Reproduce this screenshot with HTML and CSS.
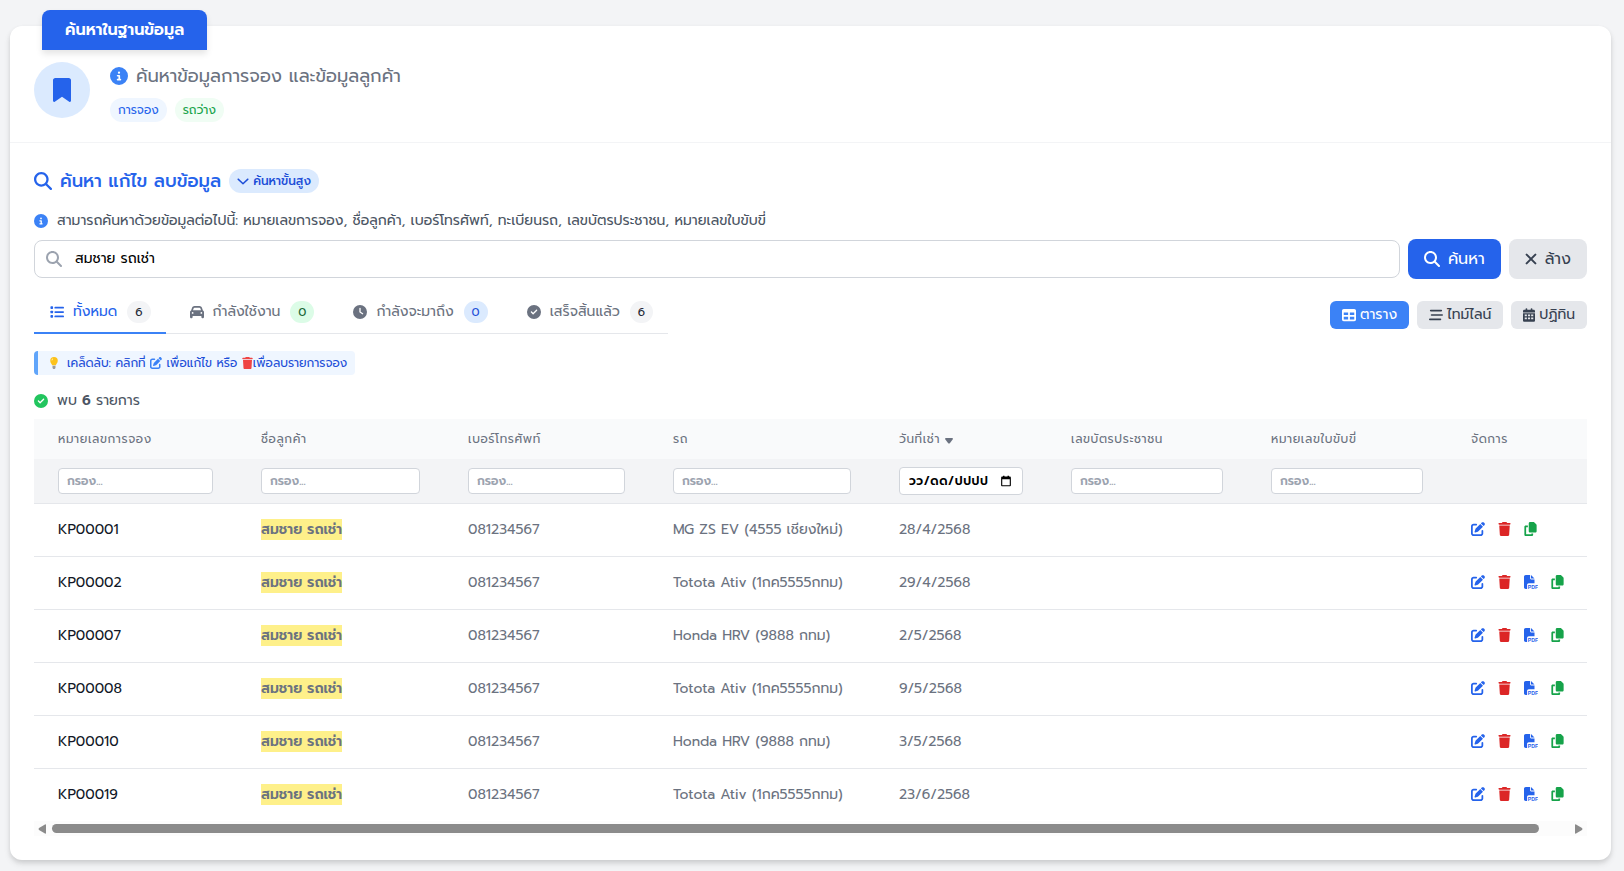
FILE: index.html
```html
<!DOCTYPE html>
<html lang="th">
<head>
<meta charset="utf-8">
<meta name="viewport" content="width=device-width, initial-scale=1">
<title>ค้นหาในฐานข้อมูล</title>
<link rel="stylesheet" href="styles.css">
</head>
<body>
<svg class="sprite" aria-hidden="true">
  <symbol id="i-search" viewBox="0 0 512 512"><path d="M416 208c0 45.900-14.900 88.300-40 122.700L502.600 457.400c12.500 12.500 12.500 32.800 0 45.300s-32.800 12.500-45.300 0L330.700 376c-34.400 25.200-76.800 40-122.700 40C93.100 416 0 322.900 0 208S93.100 0 208 0S416 93.100 416 208zM208 352a144 144 0 1 0 0-288 144 144 0 1 0 0 288z"/></symbol>
  <symbol id="i-info" viewBox="0 0 512 512"><path d="M256 512A256 256 0 1 0 256 0a256 256 0 1 0 0 512zM216 336h24V272H216c-13.300 0-24-10.700-24-24s10.700-24 24-24h48c13.300 0 24 10.700 24 24v88h8c13.300 0 24 10.700 24 24s-10.700 24-24 24H216c-13.300 0-24-10.700-24-24s10.700-24 24-24zm40-208a32 32 0 1 1 0 64 32 32 0 1 1 0-64z"/></symbol>
  <symbol id="i-bookmark" viewBox="0 0 384 512"><path d="M0 48V487.700C0 501.100 10.900 512 24.300 512c5 0 9.900-1.500 14-4.400L192 400 345.700 507.600c4.100 2.900 9 4.400 14 4.400c13.400 0 24.300-10.900 24.300-24.300V48c0-26.500-21.500-48-48-48H48C21.500 0 0 21.500 0 48z"/></symbol>
  <symbol id="i-check" viewBox="0 0 512 512"><path d="M256 512A256 256 0 1 0 256 0a256 256 0 1 0 0 512zM369 209L241 337c-9.400 9.400-24.600 9.400-33.900 0l-64-64c-9.400-9.400-9.400-24.600 0-33.900s24.600-9.400 33.900 0l47 47L335 175c9.400-9.400 24.600-9.400 33.900 0s9.400 24.600 0 33.900z"/></symbol>
  <symbol id="i-clock" viewBox="0 0 512 512"><path d="M256 0a256 256 0 1 1 0 512A256 256 0 1 1 256 0zM232 120V256c0 8 4 15.500 10.700 20l96 64c11 7.400 25.900 4.400 33.300-6.700s4.400-25.900-6.700-33.300L280 243.200V120c0-13.300-10.700-24-24-24s-24 10.700-24 24z"/></symbol>
  <symbol id="i-car" viewBox="0 0 512 512"><path d="M135.200 117.400L109.100 192H402.900l-26.100-74.600C372.300 104.600 360.200 96 346.600 96H165.400c-13.600 0-25.700 8.600-30.200 21.400zM39.600 196.800L74.800 96.300C88.300 57.800 124.600 32 165.400 32H346.600c40.800 0 77.100 25.800 90.600 64.300l35.200 100.500c23.200 9.600 39.600 32.500 39.600 59.200V400v48c0 17.700-14.300 32-32 32H448c-17.700 0-32-14.300-32-32V400H96v48c0 17.700-14.300 32-32 32H32c-17.700 0-32-14.300-32-32V400 256c0-26.700 16.400-49.600 39.600-59.200zM128 288a32 32 0 1 0-64 0 32 32 0 1 0 64 0zm288 32a32 32 0 1 0 0-64 32 32 0 1 0 0 64z"/></symbol>
  <symbol id="i-list" viewBox="0 0 512 512"><rect x="16" y="48" width="96" height="96" rx="24"/><rect x="16" y="208" width="96" height="96" rx="24"/><rect x="16" y="368" width="96" height="96" rx="24"/><rect x="160" y="64" width="352" height="64" rx="32"/><rect x="160" y="224" width="352" height="64" rx="32"/><rect x="160" y="384" width="352" height="64" rx="32"/></symbol>
  <symbol id="i-table" viewBox="0 0 512 512"><path d="M64 256V160H224v96H64zm0 64H224v96H64V320zm224 96V320H448v96H288zM448 256H288V160H448v96zM64 32C28.700 32 0 60.700 0 96V416c0 35.300 28.700 64 64 64H448c35.300 0 64-28.700 64-64V96c0-35.300-28.700-64-64-64H64z"/></symbol>
  <symbol id="i-bars" viewBox="0 0 512 512"><rect x="32" y="64" width="448" height="60" rx="30"/><rect x="64" y="226" width="448" height="60" rx="30"/><rect x="0" y="388" width="448" height="60" rx="30"/></symbol>
  <symbol id="i-calendar" viewBox="0 0 448 512"><path fill-rule="evenodd" d="M96 32a32 32 0 0 1 64 0V64H288V32a32 32 0 0 1 64 0V64h48c26.500 0 48 21.500 48 48v48H0V112C0 85.500 21.500 64 48 64H96zM0 192H448V464c0 26.500-21.500 48-48 48H48c-26.500 0-48-21.500-48-48zM64 240v64h80v-64zM184 240v64h80v-64zM304 240v64h80v-64zM64 352v64h80v-64zM184 352v64h80v-64zM304 352v64h80v-64z"/></symbol>
  <symbol id="i-x" viewBox="0 0 384 512"><path d="M52 116L332 396M332 116L52 396" fill="none" stroke="currentColor" stroke-width="64" stroke-linecap="round"/></symbol>
  <symbol id="i-chevron" viewBox="0 0 512 512"><path d="M48 176L256 376L464 176" fill="none" stroke="currentColor" stroke-width="60" stroke-linecap="round" stroke-linejoin="round"/></symbol>
  <symbol id="i-edit" viewBox="0 0 512 512"><path d="M471.600 21.700c-21.900-21.900-57.300-21.900-79.200 0L362.300 51.700l97.900 97.900 30.100-30.100c21.900-21.900 21.900-57.300 0-79.200L471.600 21.700zm-299.200 220c-6.100 6.100-10.800 13.600-13.500 21.900l-29.600 88.800c-2.900 8.600-.6 18.100 5.800 24.600s15.900 8.700 24.600 5.800l88.800-29.600c8.200-2.700 15.700-7.400 21.900-13.500L437.700 172.300 339.700 74.300 172.400 241.700zM96 64C43 64 0 107 0 160V416c0 53 43 96 96 96H352c53 0 96-43 96-96V320c0-17.700-14.300-32-32-32s-32 14.300-32 32v96c0 17.700-14.300 32-32 32H96c-17.700 0-32-14.300-32-32V160c0-17.700 14.300-32 32-32h96c17.700 0 32-14.300 32-32s-14.300-32-32-32H96z"/></symbol>
  <symbol id="i-trash" viewBox="0 0 448 512"><path d="M135.200 17.700L128 32H32C14.300 32 0 46.300 0 64S14.300 96 32 96H416c17.700 0 32-14.300 32-32s-14.300-32-32-32H320l-7.200-14.300C307.400 6.800 296.300 0 284.200 0H163.800c-12.100 0-23.200 6.800-28.600 17.700zM416 128H32L53.200 467c1.600 25.300 22.600 45 47.900 45H346.900c25.300 0 46.300-19.700 47.900-45L416 128z"/></symbol>
  <symbol id="i-copy" viewBox="0 0 448 512"><path d="M208 0H332.100c12.700 0 24.900 5.100 33.900 14.100l67.900 67.900c9 9 14.100 21.200 14.100 33.900V336c0 26.500-21.500 48-48 48H208c-26.500 0-48-21.500-48-48V48c0-26.500 21.500-48 48-48zM48 128h80v64H64V448H256V416h64v48c0 26.500-21.500 48-48 48H48c-26.500 0-48-21.500-48-48V176c0-26.500 21.500-48 48-48z"/></symbol>
  <symbol id="i-pdf" viewBox="0 0 512 512"><path d="M0 64C0 28.700 28.700 0 64 0H224V128c0 17.700 14.300 32 32 32H384V304H176c-35.300 0-64 28.700-64 64V512H64c-35.300 0-64-28.700-64-64V64zm384 64H256V0L384 128z"/><text class="pdf-label" x="138" y="510">PDF</text></symbol>
  <symbol id="i-bulb" viewBox="0 0 16 16"><path fill="#fcc21b" d="M8 0a5 5 0 0 0-5 5C3 7.800 5 9 5.500 11h5c.5-2 2.500-3.200 2.500-6A5 5 0 0 0 8 0z"/><path fill="#fff0a8" d="M6.600 1.600c-1.300.5-2 1.800-1.900 3.200.7.100 2.500-1.600 1.900-3.200z"/><path fill="#9b9b9b" d="M6 11.500h4v3L9 16H7l-1-1.500z"/></symbol>
  <symbol id="i-date" viewBox="0 0 16 16"><path fill-rule="evenodd" d="M3 2h1V1h2v1h4V1h2v1h1c.8 0 1.500.7 1.500 1.500v10c0 .8-.7 1.500-1.500 1.500H3c-.8 0-1.500-.7-1.500-1.500v-10C1.500 2.700 2.200 2 3 2zM3 5.500v8h10v-8z"/></symbol>
</svg>

<main class="card">
  <h1 class="card-tab">ค้นหาในฐานข้อมูล</h1>
  <header class="intro">
    <span class="avatar"><svg class="ic-bookmark"><use href="#i-bookmark"/></svg></span>
    <div class="intro-body">
      <p class="intro-title"><svg class="ic18 info"><use href="#i-info"/></svg><span>ค้นหาข้อมูลการจอง และข้อมูลลูกค้า</span></p>
      <div class="chips"><span class="chip blue">การจอง</span><span class="chip green">รถว่าง</span></div>
    </div>
  </header>

  <section class="content">
    <div class="heading">
      <svg class="ic18"><use href="#i-search"/></svg>
      <h2>ค้นหา แก้ไข ลบข้อมูล</h2>
      <button class="advanced" type="button"><svg class="ic12"><use href="#i-chevron"/></svg>ค้นหาขั้นสูง</button>
    </div>
    <p class="help"><svg class="ic14 info"><use href="#i-info"/></svg><label for="q">สามารถค้นหาด้วยข้อมูลต่อไปนี้: หมายเลขการจอง, ชื่อลูกค้า, เบอร์โทรศัพท์, ทะเบียนรถ, เลขบัตรประชาชน, หมายเลขใบขับขี่</label></p>
    <form class="search">
      <div class="search-box"><svg class="ic16"><use href="#i-search"/></svg><input id="q" type="text" value="สมชาย รถเช่า"></div>
      <button class="btn-search" type="button"><svg class="ic16"><use href="#i-search"/></svg>ค้นหา</button>
      <button class="btn-clear" type="button"><svg class="ic-x"><use href="#i-x"/></svg>ล้าง</button>
    </form>

    <div class="toolbar">
      <nav class="tabs">
        <button class="tab active" type="button"><svg class="ic14"><use href="#i-list"/></svg>ทั้งหมด<span class="badge">6</span></button>
        <button class="tab" type="button"><svg class="ic14"><use href="#i-car"/></svg>กำลังใช้งาน<span class="badge b-green">0</span></button>
        <button class="tab" type="button"><svg class="ic14"><use href="#i-clock"/></svg>กำลังจะมาถึง<span class="badge b-blue">0</span></button>
        <button class="tab" type="button"><svg class="ic14"><use href="#i-check"/></svg>เสร็จสิ้นแล้ว<span class="badge">6</span></button>
      </nav>
      <div class="views">
        <button class="view on" type="button"><svg class="ic14"><use href="#i-table"/></svg>ตาราง</button>
        <button class="view" type="button"><svg class="ic14"><use href="#i-bars"/></svg>ไทม์ไลน์</button>
        <button class="view" type="button"><svg class="ic-cal"><use href="#i-calendar"/></svg>ปฏิทิน</button>
      </div>
    </div>

    <p class="tip"><svg class="ic12 bulb"><use href="#i-bulb"/></svg>เคล็ดลับ: คลิกที่ <svg class="ic12 info"><use href="#i-edit"/></svg> เพื่อแก้ไข หรือ <svg class="ic-trash red"><use href="#i-trash"/></svg>เพื่อลบรายการจอง</p>
    <p class="found"><svg class="ic14"><use href="#i-check"/></svg><span>พบ <strong>6</strong> รายการ</span></p>

    <div class="table-wrap">
      <table>
        <colgroup><col class="c-id"><col class="c-name"><col class="c-phone"><col class="c-car"><col class="c-date"><col class="c-card"><col class="c-card"><col class="c-act"></colgroup>
        <thead>
          <tr><th>หมายเลขการจอง</th><th>ชื่อลูกค้า</th><th>เบอร์โทรศัพท์</th><th>รถ</th><th>วันที่เช่า <svg class="sort" viewBox="0 0 8 6"><path d="M0 1Q0 0 1 0H7Q8 0 8 1L5 5Q4 6 3 5Z"/></svg></th><th>เลขบัตรประชาชน</th><th>หมายเลขใบขับขี่</th><th>จัดการ</th></tr>
          <tr class="filters">
            <th><input type="text" aria-label="หมายเลขการจอง" placeholder="กรอง..."></th>
            <th><input type="text" aria-label="ชื่อลูกค้า" placeholder="กรอง..."></th>
            <th><input type="text" aria-label="เบอร์โทรศัพท์" placeholder="กรอง..."></th>
            <th><input type="text" aria-label="รถ" placeholder="กรอง..."></th>
            <th><div class="date"><input type="text" aria-label="วันที่เช่า" value="วว/ดด/ปปปป"><svg class="ic12"><use href="#i-date"/></svg></div></th>
            <th><input type="text" aria-label="เลขบัตรประชาชน" placeholder="กรอง..."></th>
            <th><input type="text" aria-label="หมายเลขใบขับขี่" placeholder="กรอง..."></th>
            <th></th>
          </tr>
        </thead>
        <tbody id="rows"></tbody>
      </table>
    </div>
    <div class="scroll"><svg viewBox="0 0 8 10"><path d="M8 1V9Q8 10 7 9.500L1 6Q0 5 1 4L7 .5Q8 0 8 1z"/></svg><div class="track"><div class="thumb"></div></div><svg viewBox="0 0 8 10"><path d="M0 1V9Q0 10 1 9.500L7 6Q8 5 7 4L1 .5Q0 0 0 1z"/></svg></div>
  </section>
</main>
<script src="app.js"></script>
</body>
</html>
```

FILE: styles.css
```css
* { box-sizing: border-box; }
body { margin: 0; padding: 26px 13px 11px 10px; background: #f3f4f6; color: #4b5563; font: 14px/20px "Prompt", "Noto Sans Thai", "Noto Sans", sans-serif; }
h1, h2, p { margin: 0; }
button, input { font: inherit; color: inherit; margin: 0; }
button { border: 0; cursor: pointer; white-space: nowrap; }
svg { display: block; flex: none; fill: currentColor; }
.sprite { position: absolute; width: 0; height: 0; }
.ic18 { width: 18px; height: 18px; }
.ic16 { width: 16px; height: 16px; }
.ic14 { width: 14px; height: 14px; }
.ic12 { width: 12px; height: 12px; }
.ic-cal { width: 12px; height: 14px; }
.ic-x { width: 12px; height: 16px; }
.ic-trash { width: 11px; height: 12px; }
.ic-bookmark { width: 18px; height: 24px; }
.info { color: #3b82f6; }
.red { color: #ef4444; }

.card { position: relative; background: #fff; border-radius: 12px; box-shadow: 0 4px 6px rgba(0,0,0,.1), 0 2px 4px rgba(0,0,0,.08); }
.card-tab { position: absolute; top: -16px; left: 32px; padding: 8px 23px; border-radius: 8px 8px 0 0; background: #2563eb; color: #fff; font-size: 16px; line-height: 24px; font-weight: 600; white-space: nowrap; box-shadow: 0 4px 6px rgba(0,0,0,.1); }
.intro { display: flex; gap: 20px; padding: 36px 24px 20px; border-bottom: 1px solid #f3f4f6; }
.avatar { display: flex; align-items: center; justify-content: center; width: 56px; height: 56px; border-radius: 50%; background: #dbeafe; color: #2563eb; }
.intro-title { display: flex; align-items: center; gap: 8px; height: 28px; font-size: 18px; line-height: 28px; color: #6b7280; }
.chips { display: flex; gap: 8px; margin-top: 8px; }
.chip { padding: 4px 8px; border-radius: 12px; font-size: 12px; line-height: 16px; }
.blue { background: #eff6ff; color: #2563eb; }
.green { background: #f0fdf4; color: #16a34a; }

.content { padding: 24px; }
.heading { display: flex; align-items: center; gap: 8px; height: 28px; color: #2563eb; }
.heading h2 { font-size: 18px; line-height: 28px; font-weight: 500; }
.advanced { display: flex; align-items: center; gap: 4px; padding: 4px 8px; border-radius: 12px; background: #dbeafe; color: #1d4ed8; font-size: 12px; line-height: 16px; font-weight: 500; }
.help { display: flex; align-items: center; gap: 9px; height: 20px; margin-top: 16px; }
.search { display: flex; align-items: center; gap: 8px; margin-top: 8px; }
.search-box { display: flex; align-items: center; gap: 13px; flex: 1; height: 38px; padding: 0 11px; border: 1px solid #d1d5db; border-radius: 8px; color: #9ca3af; }
.search-box input { flex: 1; height: 36px; padding: 0 0 2px; border: 0; outline: 0; background: none; color: #000; }
.btn-search, .btn-clear { display: flex; align-items: center; gap: 8px; height: 40px; padding: 0 16px; border-radius: 8px; font-size: 16px; }
.btn-search { background: #2563eb; color: #fff; }
.btn-clear { background: #e5e7eb; color: #374151; }

.toolbar { display: flex; justify-content: space-between; align-items: center; margin-top: 12px; }
.tabs { display: flex; gap: 8px; border-bottom: 1px solid #e5e7eb; }
.tab { display: flex; align-items: center; gap: 9px; height: 43px; margin-bottom: -1px; padding: 0 15px 0 16px; border-bottom: 2px solid transparent; background: none; color: #6b7280; }
.tab.active { color: #2563eb; border-color: #3b82f6; }
.badge { margin-left: 1px; padding: 3px 8px; border-radius: 11px; background: #f3f4f6; color: #1f2937; font-size: 12px; line-height: 16px; }
.b-green { background: #dcfce7; color: #166534; }
.b-blue { background: #dbeafe; color: #1d4ed8; }
.views { display: flex; gap: 8px; padding-top: 4px; }
.view { display: flex; align-items: center; gap: 4px; padding: 4px 12px; border-radius: 6px; background: #e5e7eb; color: #374151; }
.view.on { background: #3b82f6; color: #fff; }

.tip { width: fit-content; margin-top: 17px; padding: 4px 8px 4px 10px; border-left: 4px solid #60a5fa; border-radius: 4px; background: #eff6ff; color: #1d4ed8; font-size: 12px; line-height: 16px; }
.tip svg { display: inline-block; vertical-align: -2px; }
.tip .bulb { margin-right: 7px; }
.found { display: flex; align-items: center; gap: 9px; margin-top: 16px; }
.found svg { color: #22c55e; }
.found strong { font-weight: 600; }

.table-wrap { margin-top: 8px; overflow: hidden; }
table { width: 100%; table-layout: fixed; border-collapse: collapse; }
.c-id { width: 13.07%; } .c-name { width: 13.33%; } .c-phone { width: 13.2%; } .c-car { width: 14.55%; }
.c-date { width: 11.08%; } .c-card { width: 12.88%; } .c-act { width: 9.01%; }
th { height: 40px; padding: 0 24px; background: #f9fafb; color: #6b7280; font-size: 12px; line-height: 16px; font-weight: 400; letter-spacing: .05em; text-align: left; white-space: nowrap; }
.sort { display: inline-block; width: 8px; height: 6px; vertical-align: -1px; }
.filters th { height: 44px; background: #f3f4f6; }
.filters input { display: block; width: 100%; height: 26px; padding: 0 8px; border: 1px solid #d1d5db; border-radius: 4px; background: #fff; font-size: 12px; font-weight: 600; }
.filters input::placeholder { color: #9ca3af; opacity: 1; }
.filters .date { display: flex; align-items: center; height: 28px; padding-right: 10px; border: 1px solid #d1d5db; border-radius: 4px; background: #fff; color: #000; }
.filters .date input { flex: 1; min-width: 0; padding: 0 0 0 9px; border: 0; background: none; letter-spacing: inherit; }
td { height: 53px; padding: 0 24px; border-top: 1px solid #e5e7eb; color: #6b7280; white-space: nowrap; }
td:first-child { color: #111827; }
mark { display: inline-block; background: #fef08a; color: inherit; font-weight: 600; line-height: 21px; }
.actions { display: flex; gap: 13px; padding-bottom: 2px; }
.actions button { padding: 0; background: none; }
.actions .ic-trash, .actions .ic-copy { width: 13px; height: 14px; }
.a-blue { color: #2563eb; } .a-red { color: #dc2626; } .a-green { color: #16a34a; }
.pdf-label { font: 700 190px "Liberation Sans", sans-serif; }

.scroll { display: flex; align-items: center; gap: 6px; height: 15px; padding: 0 4px; background: #fcfcfc; color: #8b8b8b; }
.scroll svg { width: 8px; height: 10px; }
.track { flex: 1; }
.thumb { width: 98%; height: 9px; border-radius: 5px; background: #8b8b8b; }
```

FILE: app.js
```js
const bookings = [
  ["KP00001", "MG ZS EV (4555 เชียงใหม่)", "28/4/2568", false],
  ["KP00002", "Totota Ativ (1กค5555กทม)", "29/4/2568", true],
  ["KP00007", "Honda HRV (9888 กทม)", "2/5/2568", true],
  ["KP00008", "Totota Ativ (1กค5555กทม)", "9/5/2568", true],
  ["KP00010", "Honda HRV (9888 กทม)", "3/5/2568", true],
  ["KP00019", "Totota Ativ (1กค5555กทม)", "23/6/2568", true]
];
const action = (icon, size, colour, label) =>
  `<button type="button" class="${colour}" aria-label="${label}"><svg class="${size}"><use href="#${icon}"/></svg></button>`;
document.getElementById("rows").innerHTML = bookings.map(([id, car, date, pdf]) => `
  <tr><td>${id}</td><td><mark>สมชาย รถเช่า</mark></td><td>081234567</td><td>${car}</td><td>${date}</td><td></td><td></td>
  <td><div class="actions">${action("i-edit", "ic14", "a-blue", "แก้ไข")}${action("i-trash", "ic-trash", "a-red", "ลบ")}${pdf ? action("i-pdf", "ic14", "a-blue", "PDF") : ""}${action("i-copy", "ic-copy", "a-green", "คัดลอก")}</div></td></tr>`).join("");
```
